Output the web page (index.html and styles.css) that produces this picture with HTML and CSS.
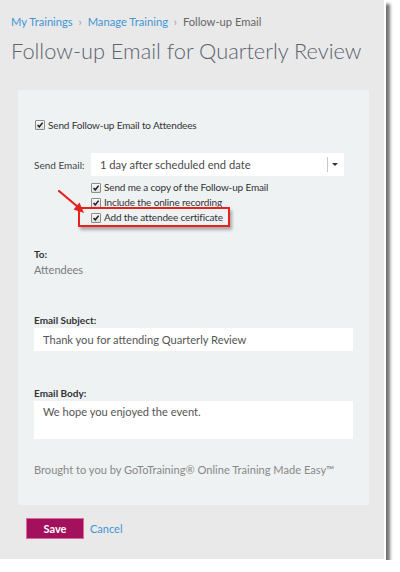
FILE: index.html
```html
<!DOCTYPE html>
<html lang="en">
<head>
    <meta charset="UTF-8">
    <meta name="viewport" content="width=device-width, initial-scale=1.0">
    <title>Follow-up Email</title>
    <link rel="stylesheet" href="styles.css">
</head>
<body>

    <div class="page">
        <nav class="crumbs">
            <a href="#">My Trainings</a>
            <span class="sep">›</span>
            <a href="#">Manage Training</a>
            <span class="sep">›</span>
            <span class="current">Follow-up Email</span>
        </nav>

        <h1>Follow-up Email for Quarterly Review</h1>

        <div class="panel">
            <label class="check main-check">
                <span class="box"><svg viewBox="0 0 9 9"><path d="M1.8 4.6 L3.7 6.6 L7.4 1.8"/></svg></span>
                Send Follow-up Email to Attendees
            </label>

            <div class="send-row">
                <span class="field-label">Send Email:</span>
                <div class="select">
                    <span class="select-text">1 day after scheduled end date</span>
                    <span class="select-divider"></span>
                    <span class="caret"></span>
                </div>
            </div>

            <div class="options">
                <label class="check">
                    <span class="box"><svg viewBox="0 0 9 9"><path d="M1.8 4.6 L3.7 6.6 L7.4 1.8"/></svg></span>
                    Send me a copy of the Follow-up Email
                </label>
                <label class="check">
                    <span class="box"><svg viewBox="0 0 9 9"><path d="M1.8 4.6 L3.7 6.6 L7.4 1.8"/></svg></span>
                    Include the online recording
                </label>
                <label class="check">
                    <span class="box"><svg viewBox="0 0 9 9"><path d="M1.8 4.6 L3.7 6.6 L7.4 1.8"/></svg></span>
                    Add the attendee certificate
                </label>
                <div class="highlight"></div>
            </div>

            <!-- annotation arrow -->
            <svg class="arrow" viewBox="0 0 30 26">
                <path d="M1 1 L20 17" stroke="#e3231f" stroke-width="2.2" stroke-linecap="round"/>
                <path d="M26 23 L15.5 19.5 L21.5 12.5 Z" fill="#e3231f"/>
            </svg>

            <div class="field to-field">
                <div class="field-title">To:</div>
                <div class="to-value">Attendees</div>
            </div>

            <div class="field">
                <div class="field-title">Email Subject:</div>
                <div class="input">Thank you for attending Quarterly Review</div>
            </div>

            <div class="field">
                <div class="field-title">Email Body:</div>
                <div class="input textarea">We hope you enjoyed the event.</div>
            </div>

            <div class="footer-note">Brought to you by GoToTraining® Online Training Made Easy™</div>
        </div>

        <div class="actions">
            <button class="save">Save</button>
            <a href="#" class="cancel">Cancel</a>
        </div>
    </div>

</body>
</html>
```

FILE: styles.css
```css
body {
    margin: 0;
    background: #fff;
    font-family: Lato, "Open Sans", sans-serif;
    color: #333;
}

.page {
    width: 386px;
    height: 560px;
    box-sizing: border-box;
    background-color: #e9e9e9;
    border-right: 2px solid #fff;
    border-bottom: 1px solid #fff;
    box-shadow: 4px 4px 3px rgba(0, 0, 0, 0.55);
    padding: 14px 0 0 0;
}

.crumbs {
    padding-left: 11px;
    font-size: 11.2px;
    line-height: 16px;
    height: 16px;
    color: #666;
}

.crumbs a {
    color: #3f95d6;
    text-decoration: none;
}

.crumbs .sep {
    color: #999;
    margin: 0 3px;
}

h1 {
    margin: 6px 0 0 0;
    padding-left: 11px;
    font-size: 21.8px;
    line-height: 30px;
    font-weight: 300;
    color: #5c6470;
    white-space: nowrap;
}

.panel {
    position: relative;
    margin: 24px 0 0 18px;
    width: 351px;
    box-sizing: border-box;
    background-color: #eff2f3;
    padding: 28px 16px 21px 16px;
}

.check {
    display: flex;
    align-items: center;
    font-size: 10px;
    letter-spacing: -0.15px;
    line-height: 15px;
    color: #333;
    white-space: nowrap;
}

.box {
    width: 8px;
    height: 8px;
    border: 1px solid #8c8c8c;
    border-radius: 1px;
    background: linear-gradient(#fafafa, #dcdcdc);
    margin-right: 3px;
    display: inline-flex;
}

.box svg {
    width: 8px;
    height: 8px;
    fill: none;
    stroke: #1a1a1a;
    stroke-width: 1.7;
}

.main-check {
    margin-left: 1px;
    line-height: 14px;
}

.send-row {
    display: flex;
    align-items: center;
    margin-top: 21px;
}

.field-label {
    width: 57px;
    font-size: 10px;
    color: #444;
}

.select {
    flex: none;
    width: 253px;
    height: 23px;
    background: #fff;
    display: flex;
    align-items: center;
    box-sizing: border-box;
    padding-left: 9px;
}

.select-text {
    flex: 1;
    font-size: 11.2px;
    color: #4a4a4a;
}

.select-divider {
    width: 1px;
    height: 15px;
    background: #c8c8c8;
    margin-right: 4px;
}

.caret {
    width: 0;
    height: 0;
    border-left: 3px solid transparent;
    border-right: 3px solid transparent;
    border-top: 3px solid #333;
    margin-right: 6px;
}

.options {
    position: relative;
    margin: 4px 0 0 57px;
}

.highlight {
    position: absolute;
    left: -13px;
    top: 27px;
    width: 148px;
    height: 16px;
    border: 2px solid #e8211d;
    box-shadow: 2px 3px 3px rgba(0, 0, 0, 0.3);
}

.arrow {
    position: absolute;
    left: 40px;
    top: 100px;
    width: 30px;
    height: 26px;
}

.field {
    margin-top: 35px;
}

.to-field {
    margin-top: 22px;
}

.field-title {
    font-size: 10px;
    line-height: 14px;
    font-weight: 700;
    color: #333;
}

.to-value {
    margin-top: 1px;
    font-size: 11px;
    line-height: 16px;
    color: #7a7a7a;
}

.input {
    margin-top: 1px;
    height: 23px;
    background: #fff;
    box-sizing: border-box;
    padding: 0 9px;
    font-size: 11.1px;
    line-height: 23px;
    color: #555;
}

.textarea {
    height: 38px;
    line-height: 22px;
}

.footer-note {
    margin-top: 23px;
    margin-bottom: 6px;
    font-size: 11.1px;
    line-height: 16px;
    color: #888;
    white-space: nowrap;
}

.actions {
    display: flex;
    align-items: center;
    margin: 13px 0 0 26px;
}

.save {
    width: 58px;
    height: 21px;
    background-color: #a3105c;
    border: 1px solid #d86a9f;
    color: #fff;
    font-family: inherit;
    font-size: 11px;
    font-weight: 700;
    padding: 0;
    cursor: pointer;
}

.cancel {
    margin-left: 6px;
    font-size: 11px;
    color: #3f95d6;
    text-decoration: none;
}
```
